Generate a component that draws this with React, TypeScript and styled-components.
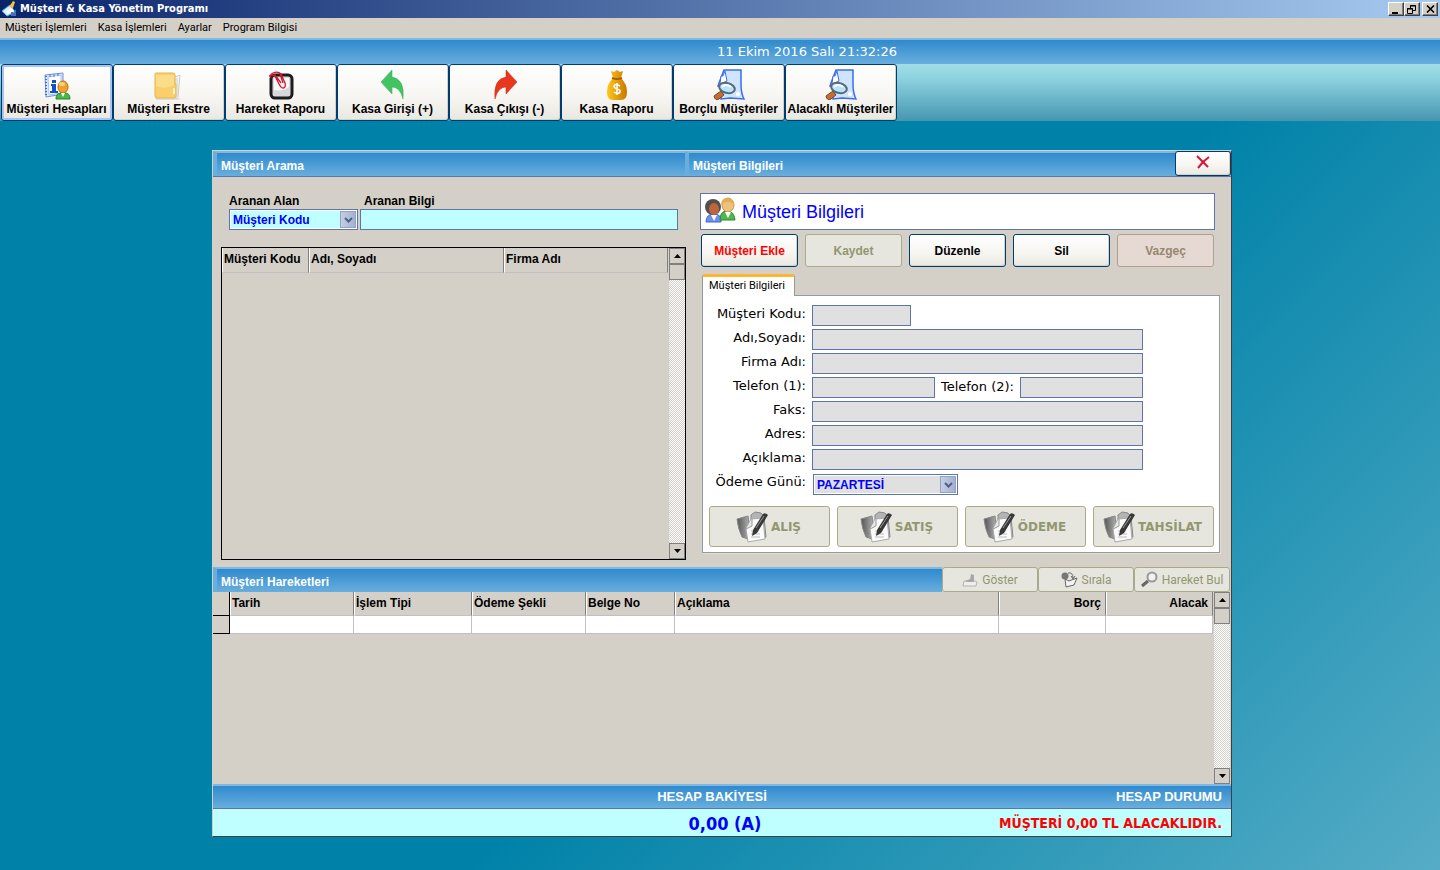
import React, { useId } from "react";
import styled, { createGlobalStyle, css } from "styled-components";

const sans = `"Liberation Sans", Arial, sans-serif`;
const tahoma = `"DejaVu Sans Condensed", "DejaVu Sans", sans-serif`;
const menuFace = `Roboto, sans-serif`;
const verdana = `"DejaVu Sans", Verdana, sans-serif`;
const face = "#d4d0c8";
const navy = "#003c74";
const steel = "#5f74a8";
const cyan = "#c0ffff";

const Global = createGlobalStyle`
  * { box-sizing: border-box; }
  html, body { margin: 0; }
  body { background: #0082a8; color: #000; font: 11px/13px ${sans}; }
  button, input, select { font: inherit; color: inherit; margin: 0; }
`;

const Page = styled.div`
  display: flex;
  flex-direction: column;
  min-height: 100vh;
  background: linear-gradient(135deg, #0082a8 0%, #0082a8 58%, #56acc6 100%);
`;

const TitleBar = styled.header`
  display: flex;
  align-items: center;
  gap: 3px;
  height: 18px;
  padding: 0 2px;
  background: linear-gradient(90deg, #0a246a, #a6caf0);
`;
const WindowTitle = styled.h1`
  flex: 1;
  margin: 0;
  color: #fff;
  font: bold 11px/18px ${tahoma};
`;
const WindowButtons = styled.div`
  display: flex;
`;
const WindowButton = styled.button<{ $apart?: boolean }>`
  display: flex;
  align-items: center;
  justify-content: center;
  width: 16px;
  height: 14px;
  margin-left: ${(p) => (p.$apart ? 2 : 0)}px;
  padding: 0;
  border: 1px solid;
  border-color: #fff #404040 #404040 #fff;
  background: ${face};
  box-shadow: inset -1px -1px 0 #808080;
`;

const MenuBar = styled.nav`
  display: flex;
  gap: 11px;
  height: 20px;
  padding: 0 5px;
  background: ${face};
`;
const MenuLink = styled.a`
  color: #000;
  font: 11px/20px ${menuFace};
  text-decoration: none;
`;

const blueBar = css`
  background: linear-gradient(#2f8acd, #68aede);
  border-top: 2px solid #7fb8e2;
  color: #fff;
`;
const ClockBar = styled.div`
  ${blueBar}
  height: 26px;
  padding-left: 717px;
  font: 13px/24px ${verdana};
  white-space: nowrap;
`;

const ToolBar = styled.div`
  display: flex;
  height: 57px;
  padding-left: 1px;
  background: linear-gradient(#a2dde4, #8dd2df 25%, #4696b0);
`;
const xpButton = css`
  border: 1px solid ${navy};
  border-radius: 3px;
  background: linear-gradient(#fff, #f6f5f1 60%, #e8e7e0);
  box-shadow: inset -1px -1px 0 #d6d0c5;
`;
const ToolButton = styled.button<{ $active?: boolean }>`
  ${xpButton}
  display: flex;
  flex-direction: column;
  align-items: center;
  justify-content: flex-end;
  gap: 1px;
  width: 112px;
  height: 57px;
  padding: 0 1px 4px 0;
  font: bold 12px/14px ${sans};
  white-space: nowrap;
  ${(p) => p.$active && "box-shadow: inset 0 0 0 2px #a9c2f0;"}
`;

const Desktop = styled.main`
  display: flex;
  justify-content: center;
  padding: 29px 0 32px 4px;
`;
const Panel = styled.section`
  width: 100%;
  max-width: 1020px;
  border: 1px solid #404040;
  border-top-color: ${face};
  border-left-color: ${face};
  background: ${face};
`;
const PanelHead = styled.div`
  display: flex;
  height: 26px;
  border-bottom: 1px solid ${steel};
  background: #68aede;
`;
const Heading = styled.h2<{ $grow?: boolean }>`
  ${blueBar}
  flex: ${(p) => (p.$grow ? "1" : "0 0 472px")};
  margin: 0;
  padding-left: 4px;
  border-left: 4px solid #68aede;
  font: bold 12px/26px ${sans};
`;
const CloseButton = styled.button`
  ${xpButton}
  width: 56px;
  height: 25px;
  padding: 0;
`;

const Columns = styled.div`
  display: flex;
  height: 390px;
`;
const SearchPane = styled.div`
  display: flex;
  flex: 0 0 474px;
  flex-direction: column;
  padding: 17px 1px 7px 8px;
`;
const SearchFields = styled.div`
  display: grid;
  grid-template-columns: 129px 1fr;
  gap: 1px 2px;
  padding: 0 8px 17px;
  font: bold 12px/14px ${sans};
`;
const FieldName = styled.label<{ $inset?: boolean }>`
  padding-left: ${(p) => (p.$inset ? 4 : 0)}px;
`;
const boxed = css`
  width: 100%;
  height: 21px;
  border: 1px solid ${steel};
  border-radius: 0;
  outline: 0;
`;
const SearchInput = styled.input`
  ${boxed}
  padding: 0 3px;
  background: ${cyan};
`;

const SelectFrame = styled.span<{ $width: number; $bg: string }>`
  ${boxed}
  display: flex;
  width: ${(p) => p.$width}px;
  padding: 1px;
  background: ${(p) => p.$bg};
  box-shadow: inset 0 0 0 1px #fff;
`;
const SelectBox = styled.select`
  width: 100%;
  padding: 0 2px;
  border: 0;
  background: transparent;
  color: #00f;
  font: bold 12px/14px ${sans};
  appearance: none;
  outline: 0;
  opacity: 1;
`;
const SelectArrow = styled.span`
  display: flex;
  flex: 0 0 16px;
  align-items: center;
  justify-content: center;
  border: 1px solid #94a0c4;
  background: linear-gradient(90deg, #c5cee2, #a4b0d0);
`;

const GridFrame = styled.div<{ $line?: boolean }>`
  display: flex;
  flex: 1;
  border: ${(p) => (p.$line ? "1px solid #000" : "0")};
`;
const GridArea = styled.div`
  flex: 1;
  padding-right: 1px;
`;
const Grid = styled.table`
  width: 100%;
  border-collapse: separate;
  border-spacing: 0;
  table-layout: fixed;
  font: bold 12px/14px ${sans};
`;
const HeadCell = styled.th<{ $right?: boolean; $low?: boolean }>`
  height: ${(p) => (p.$low ? 24 : 25)}px;
  padding: 0 4px 2px 1px;
  border-right: 1px solid #808080;
  border-bottom: 1px solid #c0c0c0;
  border-left: 1px solid #fff;
  text-align: ${(p) => (p.$right ? "right" : "left")};
  white-space: nowrap;
`;
const Corner = styled.th`
  padding: 0;
  border-right: 1px solid #000;
  border-bottom: 1px solid #000;
`;
const RowMark = styled.td`
  height: 18px;
  padding: 0;
  border-right: 1px solid #000;
  border-bottom: 1px solid #000;
`;
const Cell = styled.td`
  padding: 0;
  border-right: 1px solid #c0c0c0;
  border-bottom: 1px solid #c0c0c0;
  background: #fff;
`;

const ScrollTrack = styled.div`
  display: flex;
  flex: 0 0 16px;
  flex-direction: column;
  background: repeating-conic-gradient(#fff 0 25%, ${face} 0 50%) 0 0 / 2px 2px;
`;
const ScrollButton = styled.button`
  display: flex;
  align-items: center;
  justify-content: center;
  height: 16px;
  padding: 0;
  border: 1px solid #808080;
  background: ${face};
`;
const ScrollThumb = styled.div`
  height: 16px;
  margin-bottom: auto;
  border: 1px solid #808080;
  background: ${face};
`;

const DetailPane = styled.div`
  flex: 1;
  min-width: 0;
  padding: 16px 11px 0 13px;
`;
const Banner = styled.div`
  display: flex;
  align-items: center;
  gap: 5px;
  height: 37px;
  margin-right: 5px;
  padding: 0 4px 2px;
  border: 1px solid ${steel};
  background: #fff;
`;
const BannerTitle = styled.h2`
  margin: 0;
  padding-top: 3px;
  color: #00f;
  font: 18px/20px ${sans};
`;
const Actions = styled.div`
  display: flex;
  gap: 7px;
  padding: 4px 6px 7px 1px;
`;
const faded = css`
  border-color: #a9aa8c;
  background: #e6e6df;
  box-shadow: none;
  color: #929770;
`;
const ActionButton = styled.button<{ $tone?: "add" | "cancel" }>`
  ${xpButton}
  flex: 1;
  height: 33px;
  padding: 0;
  font: bold 12px/14px ${sans};
  color: ${(p) => (p.$tone === "add" ? "#f00" : "#000")};
  &:disabled { ${faded} }
  ${(p) =>
    p.$tone === "cancel" &&
    "&:disabled { background: #e6d8d2; border-color: #b0a090; color: #958870; }"}
`;
const Tab = styled.button`
  display: block;
  position: relative;
  width: 93px;
  height: 22px;
  margin: 0 0 -1px 2px;
  padding: 0 10px 3px 6px;
  border: 1px solid #919b9c;
  border-top: 3px solid #ffb62e;
  border-bottom: 0;
  border-radius: 3px 3px 0 0;
  background: #fff;
  font: 11px/13px ${menuFace};
  text-align: left;
  white-space: nowrap;
`;
const Form = styled.form`
  margin-left: 2px;
  height: 258px;
  padding: 9px 5px 5px 6px;
  border: 1px solid #919b9c;
  background: #fff;
  box-shadow: 1px 1px 0 #e4dfd0;
`;
const FormRow = styled.div`
  display: flex;
  height: 24px;
  padding-right: 71px;
  font: 13px/17px ${verdana};
`;
const FormLabel = styled.label`
  flex: 0 0 97px;
  margin-right: 6px;
  text-align: right;
  white-space: nowrap;
`;
const MidLabel = styled.label`
  flex: 0 0 85px;
  padding-right: 6px;
  text-align: right;
  line-height: 20px;
  white-space: nowrap;
`;
const FormInput = styled.input<{ $width?: number }>`
  ${boxed}
  flex: ${(p) => (p.$width ? `0 0 ${p.$width}px` : "1")};
  min-width: 0;
  padding: 0 3px;
  background: #e0e0e0;
`;
const SelectSlot = styled.div`
  padding: 1px 0 0 1px;
`;
const DealButtons = styled.div`
  display: flex;
  gap: 7px;
  padding-top: 9px;
`;
const DealButton = styled.button`
  ${xpButton}
  ${faded}
  display: flex;
  flex: 1;
  align-items: center;
  justify-content: center;
  gap: 3px;
  height: 41px;
  padding: 0 2px 0 0;
  font: bold 12px/14px ${verdana};
`;

const MoveHead = styled.div`
  display: flex;
  height: 25px;
  padding-right: 1px;
`;
const MoveButton = styled.button`
  ${xpButton}
  ${faded}
  display: flex;
  flex: 0 0 96px;
  align-items: center;
  justify-content: center;
  gap: 4px;
  padding: 0;
  font: 12px/14px ${menuFace};
  white-space: nowrap;
`;
const MoveGrid = styled.div`
  display: flex;
  height: 192px;
  padding-right: 1px;
`;
const SumHead = styled.div`
  ${blueBar}
  display: grid;
  grid-template-columns: 1fr 1fr;
  height: 25px;
  border-bottom: 1px solid ${steel};
  font: bold 13px/22px ${sans};
`;
const SumBody = styled(SumHead)`
  height: 27px;
  border: 0;
  background: ${cyan};
  font: bold 14px/29px ${tahoma};
`;
const Middle = styled.div<{ $big?: boolean }>`
  justify-self: end;
  width: 128px;
  margin-right: -54px;
  text-align: center;
  ${(p) => p.$big && "color: #00f; font-size: 18px; margin-right: -67px;"}
`;
const EndText = styled.div<{ $red?: boolean }>`
  padding-right: 9px;
  text-align: right;
  ${(p) => p.$red && "color: #f00;"}
`;

const AppIcon = () => (
  <svg width="15" height="16" viewBox="0 0 15 16">
    <path d="M0 10 8 4l5 7-8 4z" fill="#d8efff" stroke="#58a8e0" />
    <path d="m7 6 4-6 2 1-2 6z" fill="#f6c63a" />
    <path d="m4 10 6-3 2 3-6 3z" fill="#fff" />
    <path d="M9 15v-4h2v4zM12 15V9h2v6z" fill="#2e7bd0" />
    <path d="M11 15v-3h1v3z" fill="#e03a20" />
  </svg>
);
const AccountIcon = () => (
  <svg width="28" height="30" viewBox="0 0 28 30">
    <path d="m2 4 18-2v21L3 26z" fill="#dceafc" stroke="#6d90e0" />
    <path d="m5 6 13-2v18L6 24z" fill="#fff" stroke="#a8c0f0" />
    <path d="M3 5v21" stroke="#4468c8" strokeWidth="2" strokeDasharray="1 2" />
    <path d="M11 6v-3M15 5V2M7 6V3" stroke="#5878c0" />
    <path d="M9 9h4v3H9zM8 13h5v7h2v2H7v-2h2v-5H8z" fill="#1450c8" />
    <ellipse cx="20" cy="16" rx="5" ry="6" fill="#f0a030" stroke="#b86c10" />
    <ellipse cx="19" cy="13" rx="3" ry="2" fill="#ffd070" />
    <path d="M13 28q0-6 5-6l2 2 2-2q5 0 5 6z" fill="#48b848" stroke="#208828" />
    <path d="m18 22 2 4 2-4z" fill="#fff" />
  </svg>
);
const FolderIcon = () => (
  <svg width="32" height="30" viewBox="0 0 32 30">
    <path d="M2 27h26l-3 2H3z" fill="#ddd" />
    <path d="m20 7 7-3-2 22-6 1z" fill="#f4f4f4" stroke="#ccc" />
    <path d="M22 8v17M24 7v18" stroke="#d0d0d0" />
    <path d="M2 3q0-1 1-1h17q2 0 2 2v9h1v12q0 2-2 2H4q-2 0-2-2z" fill="#f8cf6a" stroke="#e6b74c" />
    <path d="M3 4h18v10q-9 5-18 1z" fill="#fbdc88" />
    <path d="M20 17h2v6h-2z" fill="#fff4c8" />
  </svg>
);
const ClipIcon = () => (
  <svg width="28" height="30" viewBox="0 0 28 30">
    <rect x="4" y="4" width="21" height="23" rx="4" fill="#d8d8dc" stroke="#1c1c1e" strokeWidth="3" />
    <path d="M7 7h15v9q-7 5-15 3z" fill="#f8f8f8" />
    <path
      d="M4 7q-2-3 2-5 5-2 8 1l4 9q1 5-2 5-2 0-4-4L8 5M2 5l6-1 6 8M13 3l3 9"
      fill="none"
      stroke="#d01828"
      strokeWidth="1.300"
    />
  </svg>
);
const ReplyIcon = ({ red }: { red?: boolean }) => (
  <svg width="28" height="32" viewBox="0 0 28 32">
    <path
      transform={red ? "translate(28 0) scale(-1 1)" : undefined}
      d="M2 13 13 1v7q13 2 11 22-3-12-11-12v7z"
      fill={red ? "#e8371c" : "#42c462"}
      stroke={red ? "#c82a14" : "#34ac50"}
      strokeWidth=".5"
    />
  </svg>
);
const MoneyIcon = () => (
  <svg width="22" height="32" viewBox="0 0 22 32">
    <defs>
      <linearGradient id="gold">
        <stop stopColor="#ffc81c" />
        <stop offset="1" stopColor="#c87800" />
      </linearGradient>
    </defs>
    <path d="m5 2 3 1 3-2 3 2 3-1-2 7q6 6 6 14 0 8-6 8H7q-6 0-6-8 0-8 6-14z" fill="url(#gold)" />
    <path d="M6 9q5 2 10 0" fill="none" stroke="#a86000" strokeWidth="2" />
    <path d="M14 17q-5-3-6 0 0 2 3 3 4 1 3 3-2 3-6 0M11 14v12" fill="none" stroke="#fff" strokeWidth="1.500" />
  </svg>
);
const LookupIcon = () => (
  <svg width="34" height="32" viewBox="0 0 34 32">
    <path d="M12 1h17v15q0 8 3 14l-14-1-9 1V17H6l1-3z" fill="#cfe5ff" stroke="#3c6cf0" strokeWidth="1.500" />
    <path d="m13 2-2 5H9l-1 8 7-3z" fill="#fff" stroke="#3c6cf0" />
    <path d="m2 27 7-5 3 4-5 4q-4 2-5-3z" fill="#c07034" stroke="#80441c" />
    <ellipse cx="15" cy="19" rx="8" ry="5" transform="rotate(15 15 19)" fill="#b4e4ff" stroke="#5c6874" strokeWidth="2" />
    <path d="M10 18q4-4 9 0" stroke="#fff" strokeWidth="2" fill="none" />
    <circle cx="26" cy="25" r="2" fill="#fff" />
  </svg>
);
const PeopleIcon = () => (
  <svg width="32" height="28" viewBox="0 0 32 28">
    <path d="M1 25q0-8 8-8t7 8z" fill="#6c90f0" stroke="#4068c8" />
    <path d="M15 23q0-9 7-9t8 9z" fill="#50b850" stroke="#288830" />
    <ellipse cx="8" cy="10" rx="8" ry="8" fill="#505050" />
    <ellipse cx="9" cy="12" rx="5" ry="6" fill="#c0643c" />
    <ellipse cx="23" cy="8" rx="6" ry="7" fill="#f0c080" stroke="#c8963c" />
    <path d="M16 7q1-7 7-6t6 6q-7-4-13 0z" fill="#e0b050" />
    <path d="m6 18 3 6 3-6zM20 15l3 6 3-6z" fill="#fff" />
  </svg>
);
const NoteIcon = () => (
  <svg width="32" height="32" viewBox="0 0 32 32">
    <defs>
      <linearGradient id="folder">
        <stop stopColor="#555" />
        <stop offset="1" stopColor="#bbb" />
      </linearGradient>
    </defs>
    <path d="m1 8 11-3 3 24-9-3Q2 18 1 8z" fill="url(#folder)" stroke="#888" />
    <path d="m15 4 4-3 6 1 3 4 2 20-15 2z" fill="#b4b4b4" stroke="#888" />
    <path d="m15 8 12-1 2 21-17 3-2-13z" fill="#fafafa" stroke="#aaa" />
    <path d="m10 18 6-3V8" stroke="#999" fill="#e8e8e8" />
    <path d="M15 20h8M15 23h9M15 26h9" stroke="#bbb" />
    <path d="M17 19 27 3q2-2 5 1L21 22l-5 3z" fill="#383838" />
    <path d="m20 17 8-12" stroke="#999" />
  </svg>
);
const ShowIcon = () => (
  <svg width="16" height="16" viewBox="0 0 16 16">
    <path d="M2 9h11l2 1-1 4H1z" fill="#eee" stroke="#b4b4b4" />
    <path d="m3 9 5-2 1-5 3 1v7H5z" fill="#a8a8a8" />
  </svg>
);
const SortIcon = () => (
  <svg width="17" height="17" viewBox="0 0 17 17">
    <path d="m4 8 4 2 8-3-3 7-8 2z" fill="#f4f4f4" stroke="#666" />
    <circle cx="4" cy="5" r="3.500" fill="#777" />
    <path d="M7 2q5-1 5 5M10 5l2 3 2-3" fill="none" stroke="#666" />
  </svg>
);
const FindIcon = () => (
  <svg width="17" height="17" viewBox="0 0 17 17">
    <path d="m1 15 6-5" stroke="#666" strokeWidth="3" />
    <circle cx="11" cy="6" r="4.500" fill="#f2f2f2" stroke="#999" strokeWidth="2" />
  </svg>
);
const Chevron = () => (
  <svg width="9" height="6" viewBox="0 0 9 6">
    <path d="m1 1 3.500 3.500L8 1" fill="none" stroke="#4d6185" strokeWidth="2" />
  </svg>
);

type ComboProps = { id: string; value: string; width: number; bg: string; disabled?: boolean };

function Combo({ id, value, width, bg, disabled }: ComboProps) {
  return (
    <SelectFrame $width={width} $bg={bg}>
      <SelectBox id={id} disabled={disabled}>
        <option>{value}</option>
      </SelectBox>
      <SelectArrow><Chevron /></SelectArrow>
    </SelectFrame>
  );
}

function ScrollBar() {
  return (
    <ScrollTrack>
      <ScrollButton type="button" aria-label="Yukarı">
        <svg width="7" height="4" viewBox="0 0 7 4"><path d="M0 4 3.500 0 7 4z" /></svg>
      </ScrollButton>
      <ScrollThumb />
      <ScrollButton type="button" aria-label="Aşağı">
        <svg width="7" height="4" viewBox="0 0 7 4"><path d="M0 0h7L3.500 4z" /></svg>
      </ScrollButton>
    </ScrollTrack>
  );
}

function Field({ label, width }: { label: string; width?: number }) {
  const id = useId();
  return (
    <FormRow>
      <FormLabel htmlFor={id}>{label}</FormLabel>
      <FormInput id={id} $width={width} disabled />
    </FormRow>
  );
}

const tools = [
  { label: "Müşteri Hesapları", icon: <AccountIcon /> },
  { label: "Müşteri Ekstre", icon: <FolderIcon /> },
  { label: "Hareket Raporu", icon: <ClipIcon /> },
  { label: "Kasa Girişi (+)", icon: <ReplyIcon /> },
  { label: "Kasa Çıkışı (-)", icon: <ReplyIcon red /> },
  { label: "Kasa Raporu", icon: <MoneyIcon /> },
  { label: "Borçlu Müşteriler", icon: <LookupIcon /> },
  { label: "Alacaklı Müşteriler", icon: <LookupIcon /> },
];

const moveColumns = [
  { label: "Tarih", width: 124 },
  { label: "İşlem Tipi", width: 118 },
  { label: "Ödeme Şekli", width: 114 },
  { label: "Belge No", width: 89 },
  { label: "Açıklama" },
  { label: "Borç", width: 107, right: true },
  { label: "Alacak", width: 107, right: true },
];

export default function App() {
  return (
    <Page>
      <Global />
      <TitleBar>
        <AppIcon />
        <WindowTitle>Müşteri & Kasa Yönetim Programı</WindowTitle>
        <WindowButtons>
          <WindowButton aria-label="Küçült">
            <svg width="10" height="9" viewBox="0 0 10 9"><path d="M1 7h6v2H1z" /></svg>
          </WindowButton>
          <WindowButton aria-label="Önceki boyut">
            <svg width="10" height="9" viewBox="0 0 10 9">
              <path d="M3.500 3V.5h5v5H6M3 1h6M.5 3.500h5v5h-5zM0 4h6" fill="none" stroke="#000" />
            </svg>
          </WindowButton>
          <WindowButton aria-label="Kapat" $apart>
            <svg width="9" height="8" viewBox="0 0 9 8">
              <path d="m1 .5 7 7m0-7-7 7" stroke="#000" strokeWidth="1.600" />
            </svg>
          </WindowButton>
        </WindowButtons>
      </TitleBar>
      <MenuBar>
        {["Müşteri İşlemleri", "Kasa İşlemleri", "Ayarlar", "Program Bilgisi"].map((m) => (
          <MenuLink key={m} href="#">{m}</MenuLink>
        ))}
      </MenuBar>
      <ClockBar>11 Ekim 2016 Salı 21:32:26</ClockBar>
      <ToolBar>
        {tools.map((t, i) => (
          <ToolButton key={t.label} type="button" $active={i === 0}>
            {t.icon}
            {t.label}
          </ToolButton>
        ))}
      </ToolBar>

      <Desktop>
        <Panel>
          <PanelHead>
            <Heading>Müşteri Arama</Heading>
            <Heading $grow>Müşteri Bilgileri</Heading>
            <CloseButton type="button" aria-label="Kapat">
              <svg width="14" height="14" viewBox="0 0 14 14">
                <path d="m1 1 11 11" stroke="#d8143c" strokeWidth="2" />
                <path d="M13 2 7 7l-5 6" fill="none" stroke="#d8143c" strokeWidth="2" />
              </svg>
            </CloseButton>
          </PanelHead>

          <Columns>
            <SearchPane>
              <SearchFields>
                <FieldName htmlFor="area">Aranan Alan</FieldName>
                <FieldName htmlFor="query" $inset>Aranan Bilgi</FieldName>
                <Combo id="area" value="Müşteri Kodu" width={129} bg={cyan} />
                <SearchInput id="query" />
              </SearchFields>
              <GridFrame $line>
                <GridArea>
                  <Grid>
                    <colgroup>
                      <col width="87" />
                      <col width="195" />
                      <col />
                    </colgroup>
                    <thead>
                      <tr>
                        <HeadCell>Müşteri Kodu</HeadCell>
                        <HeadCell>Adı, Soyadı</HeadCell>
                        <HeadCell>Firma Adı</HeadCell>
                      </tr>
                    </thead>
                  </Grid>
                </GridArea>
                <ScrollBar />
              </GridFrame>
            </SearchPane>

            <DetailPane>
              <Banner>
                <PeopleIcon />
                <BannerTitle>Müşteri Bilgileri</BannerTitle>
              </Banner>
              <Actions>
                <ActionButton type="button" $tone="add">Müşteri Ekle</ActionButton>
                <ActionButton type="button" disabled>Kaydet</ActionButton>
                <ActionButton type="button">Düzenle</ActionButton>
                <ActionButton type="button">Sil</ActionButton>
                <ActionButton type="button" $tone="cancel" disabled>Vazgeç</ActionButton>
              </Actions>
              <Tab type="button">Müşteri Bilgileri</Tab>
              <Form>
                <Field label="Müşteri Kodu:" width={99} />
                <Field label="Adı,Soyadı:" />
                <Field label="Firma Adı:" />
                <FormRow>
                  <FormLabel htmlFor="tel1">Telefon (1):</FormLabel>
                  <FormInput id="tel1" disabled />
                  <MidLabel htmlFor="tel2">Telefon (2):</MidLabel>
                  <FormInput id="tel2" disabled />
                </FormRow>
                <Field label="Faks:" />
                <Field label="Adres:" />
                <Field label="Açıklama:" />
                <FormRow>
                  <FormLabel htmlFor="payday">Ödeme Günü:</FormLabel>
                  <SelectSlot>
                    <Combo id="payday" value="PAZARTESİ" width={145} bg="#e0e0e0" disabled />
                  </SelectSlot>
                </FormRow>
                <DealButtons>
                  {["ALIŞ", "SATIŞ", "ÖDEME", "TAHSİLAT"].map((d) => (
                    <DealButton key={d} type="button" disabled>
                      <NoteIcon />
                      {d}
                    </DealButton>
                  ))}
                </DealButtons>
              </Form>
            </DetailPane>
          </Columns>

          <MoveHead>
            <Heading $grow>Müşteri Hareketleri</Heading>
            <MoveButton type="button" disabled><ShowIcon />Göster</MoveButton>
            <MoveButton type="button" disabled><SortIcon />Sırala</MoveButton>
            <MoveButton type="button" disabled><FindIcon />Hareket Bul</MoveButton>
          </MoveHead>
          <MoveGrid>
            <GridFrame>
              <GridArea>
                <Grid>
                  <colgroup>
                    <col width="17" />
                    {moveColumns.map((c) => <col key={c.label} width={c.width} />)}
                  </colgroup>
                  <thead>
                    <tr>
                      <Corner />
                      {moveColumns.map((c) => (
                        <HeadCell key={c.label} $right={c.right} $low>{c.label}</HeadCell>
                      ))}
                    </tr>
                  </thead>
                  <tbody>
                    <tr>
                      <RowMark />
                      {moveColumns.map((c) => <Cell key={c.label} />)}
                    </tr>
                  </tbody>
                </Grid>
              </GridArea>
              <ScrollBar />
            </GridFrame>
          </MoveGrid>
          <SumHead>
            <Middle>HESAP BAKİYESİ</Middle>
            <EndText>HESAP DURUMU</EndText>
          </SumHead>
          <SumBody>
            <Middle $big>0,00 (A)</Middle>
            <EndText $red>MÜŞTERİ 0,00 TL ALACAKLIDIR.</EndText>
          </SumBody>
        </Panel>
      </Desktop>
    </Page>
  );
}
